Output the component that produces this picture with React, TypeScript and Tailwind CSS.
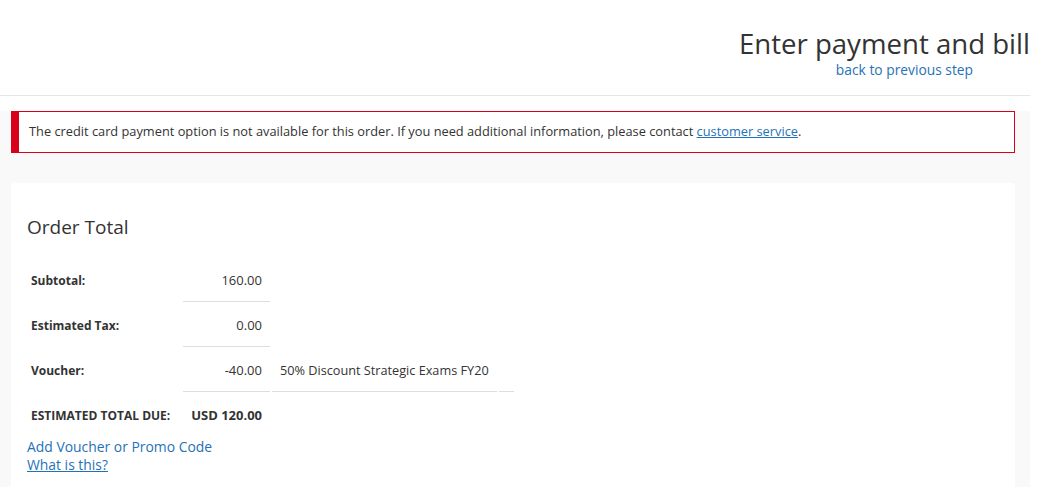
export default function App() {
  const rows = [
    { label: "Subtotal:", value: "160.00" },
    { label: "Estimated Tax:", value: "0.00" },
  ];

  return (
    <div className="min-h-[487px] bg-white font-['Open_Sans',sans-serif] text-[#333]">
      <div className="w-[1030px]">
        {/* header */}
        <div className="flex h-[96px] flex-col items-end border-b border-[#e5e5e5] pt-[25px]">
          <h1 className="text-[27.6px] leading-[36px] font-normal text-[#333]">Enter payment and bill</h1>
          <a href="#" className="mr-[57px] text-[13.8px] leading-[18px] text-[#1f72b8]">
            back to previous step
          </a>
        </div>

        {/* content */}
        <div className="mt-[15px] bg-[#f9f9f9] pl-[11px] pr-[15px] pb-[20px]">
          <div className="flex h-[42px] items-center border border-l-[8px] border-[#d9001b] bg-white pl-[10px] text-[12.8px]">
            The credit card payment option is not available for this order. If you need additional information, please contact&nbsp;
            <a href="#" className="text-[#1f72b8] underline">customer service</a>.
          </div>

          <div className="mt-[30px] rounded-sm bg-white px-[16px] pt-[31px] pb-[20px]">
            <h2 className="mb-[17px] text-[19px] leading-[26px] font-normal">Order Total</h2>

            <div className="text-[13px]">
              {rows.map((r) => (
                <div key={r.label} className="flex h-[45px]">
                  <div className="flex w-[156px] items-center pt-[2px] pl-[4px] text-[12px] font-bold">{r.label}</div>
                  <div className="flex w-[87px] items-center justify-end border-b border-[#dedede] pt-[3px] pr-[8px]">
                    {r.value}
                  </div>
                </div>
              ))}
              <div className="flex h-[45px]">
                <div className="flex w-[156px] items-center pt-[2px] pl-[4px] text-[12px] font-bold">Voucher:</div>
                <div className="flex w-[87px] items-center justify-end border-b border-[#dedede] pt-[3px] pr-[8px]">-40.00</div>
                <div className="ml-[2px] flex w-[225px] items-center border-b border-[#dedede] pt-[3px] pl-[8px] text-[12.7px]">
                  50% Discount Strategic Exams FY20
                </div>
                <div className="ml-[2px] w-[15px] border-b border-[#dedede]" />
              </div>
              <div className="flex h-[44px]">
                <div className="flex w-[156px] items-center pt-[4px] pl-[4px] text-[12px] font-bold">ESTIMATED TOTAL DUE:</div>
                <div className="flex w-[87px] items-center justify-end pt-[4px] pr-[8px] font-bold">USD 120.00</div>
              </div>
            </div>

            <div className="mt-[2px] flex flex-col items-start text-[13.9px] leading-[18px]">
              <a href="#" className="text-[#1f72b8]">Add Voucher or Promo Code</a>
              <a href="#" className="text-[#1f72b8] underline">What is this?</a>
            </div>
          </div>
        </div>
      </div>
    </div>
  );
}
